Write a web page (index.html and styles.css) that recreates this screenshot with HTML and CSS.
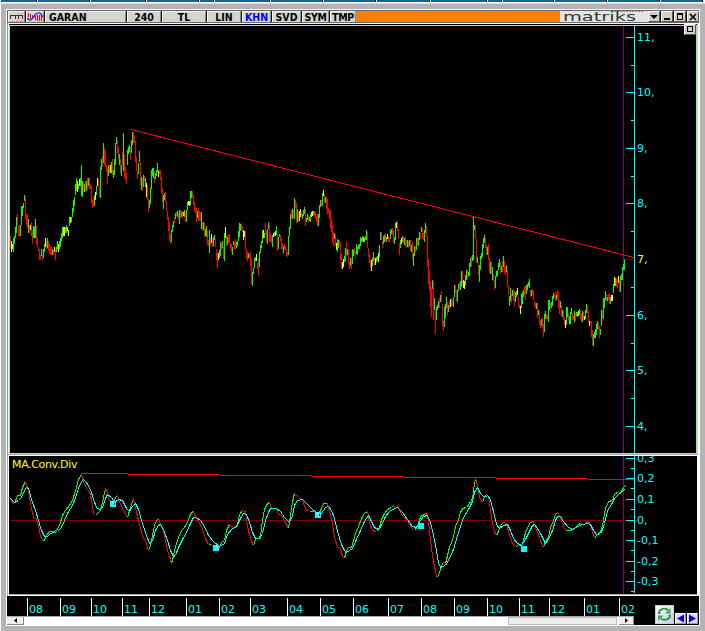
FILE: index.html
```html
<!DOCTYPE html>
<html lang="tr">
<head>
<meta charset="utf-8">
<title>GARAN</title>
<link rel="stylesheet" href="styles.css">
</head>
<body>
<div class="strip"><i class="w37"></i><i class="w52"></i><i class="w55"></i><i class="w52"></i><i class="w14"></i><i class="w55"></i><i class="w52"></i><i class="w52"></i><i class="w53"></i><i class="w56"></i><i class="w14"></i><i class="w51"></i><i class="w52"></i><i class="w52"></i><i class="w42"></i></div>
<main class="window">
  <header class="bar">
    <span class="cell ico"><svg width="16" height="10" viewBox="0 0 16 10" shape-rendering="crispEdges"><path d="M1 3H14M1.500 3V7M6.500 3V7M9.500 3V7M13.500 3V7" stroke="#333" stroke-width="1" fill="none"/><path d="M1 9.500H15" stroke="#f66" stroke-dasharray="1 1"/><path d="M8 8.500H15M9 1.500H15" stroke="#faa" stroke-dasharray="2 1"/></svg></span>
    <span class="cell ico2"><svg width="16" height="10" viewBox="0 0 16 10"><path d="M1.500 1V5M3.500 2V7M5.500 3V6M8.500 4V8M10.500 3V9M12.500 3V9M14.500 3V9" stroke="red"/><path d="M0 6L2 8H4L9 2L11 1H13L16 5" stroke="#11f" stroke-width="1.200" fill="none"/></svg></span>
    <span class="cell name">GARAN</span>
    <span class="cell c240">240</span>
    <span class="cell ctl">TL</span>
    <span class="cell clin">LIN</span>
    <span class="cell ckhn">KHN</span>
    <span class="cell csvd">SVD</span>
    <span class="cell csym">SYM</span>
    <span class="cell ctmp">TMP</span>
    <span class="orange"></span>
    <span class="logo"><svg width="88" height="11" viewBox="0 0 88 11"><path d="M54 .5H84" stroke="#f96a3a" stroke-dasharray="2 1"/><text x="3" y="10" textLength="73" lengthAdjust="spacingAndGlyphs">matriks</text></svg></span>
    <span class="btn"><svg width="11" height="9" viewBox="0 0 11 9"><path d="M1 3H9L5 7Z"/></svg></span>
    <span class="btn"><svg width="11" height="9" viewBox="0 0 11 9"><path d="M2 6H8V8H2Z"/></svg></span>
    <span class="btn"><svg width="11" height="9" viewBox="0 0 11 9"><path d="M2 1H8V8H2ZM3 3V7H7V3Z" fill-rule="evenodd"/></svg></span>
    <span class="btn"><svg width="11" height="9" viewBox="0 0 11 9"><path d="M2 2L8 8M8 2L2 8" stroke="#000" stroke-width="1.600"/></svg></span>
  </header>
  <section class="price">
    <svg id="price" width="686" height="427" viewBox="10 26 686 427"></svg>
    <span class="btn corner"><svg width="9" height="8" viewBox="0 0 9 8"><path d="M2 1H8V7H2ZM3 2V6H7V2Z" fill-rule="evenodd"/></svg></span>
  </section>
  <section class="macd"><svg id="macd" width="688" height="138" viewBox="9 456 688 138"></svg></section>
  <footer class="foot">
    <div class="timeline">
      <svg id="time" width="627" height="19" viewBox="7 597 627 19"></svg>
      <div class="scroll">
        <span class="sbtn"><svg width="5" height="5" viewBox="0 0 5 5"><path d="M1 2.500L4 0V5Z"/></svg></span>
        <span class="track"></span><span class="thumb"></span>
        <span class="sbtn right"><svg width="5" height="5" viewBox="0 0 5 5"><path d="M4 2.500L1 0V5Z"/></svg></span>
      </div>
    </div>
    <div class="tools">
      <span class="refresh"><svg width="17" height="17" viewBox="0 0 17 17"><path d="M3 8C3 3 8 1.500 12 4M14 8.500C14 13.500 9 15 5 12.500" fill="none" stroke="#279344" stroke-width="2.200"/><path d="M14.500 2V7.500H9ZM2 15V9.500H7.500Z" fill="#3cab55"/><path d="M4 6C6 3 9 3 11 5M13 10C12 12 9 13.500 6 12" stroke="#a9e3ad" fill="none"/></svg></span>
      <span class="nav"><svg width="9" height="9" viewBox="0 0 9 9"><path d="M1 4.500L8 .5V8.500Z"/></svg></span>
      <span class="nav"><svg width="9" height="9" viewBox="0 0 9 9"><path d="M8 4.500L1 .5V8.500Z"/></svg></span>
    </div>
  </footer>
</main>
<script src="chart.js"></script>
</body>
</html>
```
FILE: styles.css
```css
* { box-sizing: border-box; }
body { margin: 0; width: 705px; height: 631px; overflow: hidden; background: #b4b4b4; font: 11px "DejaVu Sans", sans-serif; border-left: 1px solid #fff; }
svg { display: block; }
.strip { height: 4px; margin-left: -1px; display: flex; background: #fff; border-bottom: 1px solid #ddd; }
.strip i { height: 2px; background: #006a9b; border-right: 1px solid #000; margin-right: 1px; flex: none; }
.w14 { width: 14px; } .w37 { width: 37px; } .w42 { width: 42px; } .w51 { width: 51px; } .w52 { width: 52px; }
.w53 { width: 53px; } .w55 { width: 55px; } .w56 { width: 56px; }
.window { width: 694px; height: 617px; margin: 5px 0 0 5px; border: 1px solid #fff; background: #000; display: flex; flex-direction: column; }
.bar { height: 13px; margin-left: 1px; border-top: 1px solid #666; border-bottom: 1px solid #666; display: flex; background: #111; flex: none; box-shadow: -1px 0 #666; }
.cell { height: 11px; background: #d5d5cf; border-left: 1px solid #fff; border-top: 1px solid #eee; border-right: 1px solid #888; margin-right: 1px; text-align: center; font: bold 10.500px/11px "DejaVu Sans Condensed", "DejaVu Sans", sans-serif; color: #000; flex: none; }
.ico { width: 17px; } .ico2 { width: 18px; }
.name { width: 81px; text-align: left; padding-left: 3px; }
.c240 { width: 34px; } .ctl { width: 44px; } .clin { width: 34px; } .ckhn { width: 29px; color: #00f; }
.csvd { width: 29px; } .csym { width: 27px; letter-spacing: -.3px; } .ctmp { width: 26px; margin: 0; letter-spacing: -.2px; }
.orange { flex: 1; background: #ff8000; }
.logo { width: 88px; background: #e4e4e4; }
.logo text { font: 13px "DejaVu Sans", sans-serif; fill: #333; }
.btn { width: 12px; margin-right: 1px; background: #d4d0c8; border: 1px solid; border-color: #fff #555 #555 #fff; flex: none; }
.bar .btn:last-child { margin-right: 0; }
.price { position: relative; width: 688px; height: 431px; margin-left: 2px; padding-top: 1px; border-top: 1px solid #fff; box-shadow: -1px 0 #fff, -2px 0 #999, 1px 0 #ccc, 2px 0 #fff; background: #000; flex: none; }
.price > svg { box-sizing: content-box; border: 1px solid #80ff80; }
.corner { position: absolute; top: 0; right: 1px; margin: 0; height: 11px; }
.macd { width: 692px; height: 142px; margin-bottom: 1px; padding-top: 1px; border-top: 1px solid #aaa; border-bottom: 1px solid #fff; border-left: 1px solid #aaa; border-right: 1px solid #fff; box-shadow: inset 1px 1px #fff, inset -1px 0 #fff; padding-left: 1px; flex: none; }
.macd svg { box-shadow: 0 1px #aaa; }
.foot { height: 28px; display: flex; justify-content: space-between; flex: none; }
.timeline { width: 627px; }
.scroll { height: 9px; display: flex; background: #fff; border-top: 1px solid #aaa; }
.sbtn { width: 17px; height: 8px; background: #eee; border-right: 1px solid #888; border-bottom: 1px solid #888; display: flex; align-items: center; justify-content: center; flex: none; }
.right { width: 15px; }
.track { flex: 1; }
.thumb { width: 109px; background: #eee; border: 1px solid #bbb; margin-right: 2px; }
.tools { display: flex; align-items: flex-end; padding: 0 1px 1px 0; gap: 1px; }
.refresh { width: 19px; height: 19px; background: linear-gradient(135deg, #fff, #c9c9ee); border: 1px solid #ccc; }
.nav { width: 11px; height: 11px; background: #ddd; border: 1px solid; border-color: #fff #999 #999 #fff; }
.nav path { fill: #0000e0; }
.axis { font: 11px "DejaVu Sans", sans-serif; fill: #0ff; }
.yellow { fill: #ff0; }
.title { letter-spacing: -.35px; }
```
FILE: chart.js
```js
const NS = "http://www.w3.org/2000/svg";
function add(parent, tag, attrs, text) {
  const el = document.createElementNS(NS, tag);
  for (const k in attrs) el.setAttribute(k, attrs[k]);
  if (text) el.textContent = text;
  parent.appendChild(el);
}
function rect(svg, x, y, width, height, fill) {
  add(svg, "rect", { x, y, width, height, fill, "shape-rendering": "crispEdges" });
}
function label(svg, x, y, text, cls) {
  add(svg, "text", { x, y, class: "axis " + (cls || "") }, text);
}
const colours = { r: "#f00", g: "#0f0", y: "#ff0" };

// One token per column from x = 10: high,low and colour; "-" leaves a gap.
const bars = `
236,248r 241,252y 244,249y 238,252g 236,244g 227,238g 217,233g 214,225r 225,236r 225,236r
225,236g 206,225g 206,216g 203,208g 195,201g 197,219r 214,225r 214,228r 219,233g 225,233r
225,230y 222,236r 230,244r 226,238g 227,238g 219,238g 225,244r 238,247r 247,251r 249,260r
255,260r 249,256g 255,260r 249,258g 244,252g 238,247y 241,249r 238,248g 241,251r 244,254r
247,255r 247,255r 249,255g 250,255r 247,252y 249,260r 247,252g 241,249g 244,252y 241,249g
238,247g 233,241g 227,238g 227,236y 227,236y 227,233g 225,233g 227,231y 230,236y 217,226g
217,223y 217,222g 208,217g 200,212g 197,206g 184,195g 178,191g 181,192y 184,189g 179,186y
178,186g 165,196g 181,197g 181,192r 184,192g 181,192r 181,191g 178,189r 178,186g 178,189r
184,189r 186,203r 200,208r 197,207r 195,206g 192,200y 186,195g 178,186y 179,187r 187,197r
167,198g 159,170g 156,167r 143,163g 148,165r 151,167r 165,172r 167,184r 165,176g 165,173r
165,173y 162,173g 159,175r 170,178g 159,175g 143,165g 137,144g 140,154r 147,159r 154,165g
159,173r 165,176g 152,165r 133,171g 154,178r 167,180r 173,184r 150,165g 147,154g 145,152g
147,160r 140,153g 132,145g 132,143r 135,143r 141,162r 157,171r 171,179r 163,174g 151,162g
162,185r 177,190g 178,191r 175,187g 176,182r 178,187g 183,197y 185,200r 199,212r 200,208g
188,204g 170,189g 168,176g 168,178g 171,183r 173,179g 170,176g 163,172g 171,177y 169,174r
170,180r 177,193r 188,203r 195,209g 193,200g 192,202r 201,211r 211,220r 217,231r 222,241r
234,244r 230,242g 225,232g 221,227g 217,223r 213,219g 212,216r 211,217g 213,220r 210,224g
210,218r 212,217g 211,218r 212,216y 210,217g 212,222r 210,222g 202,210g 201,205y 201,206y
191,205g 191,198g 191,198r 195,205r 202,211r 207,213r 208,222r 211,218g 208,221r 211,221r
212,221r 212,229g 222,231r 222,230g 223,237r 229,236g 226,237g 231,245r 240,246r 230,253g
238,246r 234,243y 239,247r 237,246g 235,240g 239,247r 249,260r 253,268r 253,260y 250,258g
242,256g 243,250r 241,248g 247,259r 233,261g 227,238y 235,246r 237,245g 235,243r 234,243r
243,248r 244,252r 247,255g 241,245g 242,249r 239,250r 242,248g 241,246g 231,241g 223,237g
224,231g 223,230r 226,232r 230,240y 231,237y 231,250r 249,259r 252,261r 253,258g 254,258r
252,266r 258,284r 272,286g 268,274g 258,268g 257,261g 254,261y 263,269r 258,276r 252,267g
245,253g 241,248g 230,243g 230,238y 233,238g 223,235r 231,243r 229,244g 222,229g 225,241r
233,242r 236,243r 235,247g 233,237y 232,236g 231,236y 226,235g 235,251r 237,249g 234,237g
235,241r 238,249r 243,249r 246,253g 244,250r 246,250r 249,256r 252,257r 236,255g 227,236g
214,229g 210,219r 209,219g 210,218r 198,219g 200,208r 203,223r 209,222g 212,222r 211,221y
209,217y 212,217r 214,219g 210,216g 207,214g 209,226r 218,222g 214,220g 215,222r 217,221g
214,222g 212,217y 211,216y 211,215g 211,216r 212,219r 216,222r 214,226r 214,226g 205,218g
200,207g 200,206r 193,206g 190,196y 194,202r 197,203g 197,209r 199,214r 208,213r 210,219r
210,228r 219,232r 225,242r 232,246r 233,239g 234,246r 243,250y 239,252g 240,248g 240,246r
242,260r 254,269r 262,269y 259,267y 256,262g 248,261g 242,256r 249,255g 250,264r 262,269r
258,266g 258,269r 249,264g 250,256g 248,254r 251,258r 244,254g 247,255g 245,249g 244,249g
237,246g 238,242g 236,241g 237,242y 238,242g 236,240g 230,240g 232,248r 248,257r 254,263r
259,268r 260,271y 258,266g 252,261g 257,265r 258,265y 257,262g 256,260g 253,262y 245,257g
232,240g 232,240r 241,248r 236,244g 235,242g 233,242r 237,242g 234,239y 236,242r 238,242r
230,239g 229,234g 228,235r 230,243r 237,244g 223,240g 222,228y 221,231r 229,239r 243,255r
240,248g 238,244y 236,242g 237,243r 238,245g 237,246r 240,248r 240,247g 241,248r 240,246g
240,251r 245,252g 242,260r 253,266g 246,256g 247,252r 238,250g 238,245r 238,246g 232,240g
233,239r 227,232g 228,238r 233,240r 230,242g 223,233g 226,236r 236,266r 259,284r 270,290r
281,307r 287,317r 280,289g 281,320r 298,310g 310,334r 307,320g 305,310g 301,308g 298,307r
295,302g 291,302r 304,326r 321,331r 307,327g 304,318g 297,308g 302,316r 305,312g 301,309r
299,307y 299,306r 301,306r 297,307g 285,297g 285,293r 290,301r 290,302g 284,291g 283,290r
281,290g 271,287g 271,285r 280,288y 281,289y 275,285g 270,280g 270,279r 272,276g 263,276g
258,267g 256,267r 255,261g 217,260g 225,230g 225,239r 239,263r 257,263g 263,275r 265,282g
256,270g 253,259g 244,257g 238,248g 235,243g 238,248r 245,255r 247,255g 244,260r 258,273r
262,274g 261,274r 267,280g 274,281r 280,290r 276,288g 271,277g 270,276g 263,270g 259,267g
262,274r 266,272g 261,272r 256,267g 261,273r 267,275r 265,272g 270,287r 286,295r 296,306g
288,301g 294,303r 290,296g 289,301r 291,307r 292,302g 291,297g 288,295y 297,306r 305,309r
306,314y 294,308g 292,304g 290,297g 286,295r 286,300r 285,294g 284,290g 282,286g 279,288g
290,297r 290,296g 289,295r 291,300r 301,306r 303,308r 303,309g 303,318r 310,315g 311,325r
320,328r 319,326g 317,328r 324,337r 314,332g 311,319g 314,319r 315,320r 300,322g 300,310g
303,312r 302,308g 296,306g 293,299g 294,298r 292,301r 295,300g 290,298r 292,308r 300,314r
301,308g 305,316r 310,317g 311,320r 317,325r 320,328y 307,325g 307,317g 313,320r 316,324g
312,324g 308,314g 313,320r 315,320r 311,322g 313,321r 312,316g 312,317g 311,316y 309,315g
310,320r 314,322r 311,322g 312,320r 316,320y 310,319g 304,313g 306,313r 311,322r 321,326y
321,324r 321,337r 330,346r 334,346g 332,338g 329,338g 324,335g 321,329g 322,330r 326,338r
329,335g 310,326g 310,321r 298,319g 298,308g 291,300g 294,301r 297,301g 294,300r 294,304r
297,304g 295,301y 295,301y 284,293g 277,286y 278,286g 278,286r 279,288r 276,283y 280,292r
276,292g 274,280g 267,280g 264,270g 259,270g`.trim().split(/\s+/);

const price = document.getElementById("price");
rect(price, 623, 26, 1, 427, "#800080");
bars.forEach((token, i) => {
  if (token === "-") return;
  const [, high, low, c] = token.match(/(\d+),(\d+)(\w)/);
  rect(price, 10 + i, +high, 1, low - high, colours[c]);
});
add(price, "path", { d: "M131 129.500L634 257.500", stroke: "#f00", "shape-rendering": "crispEdges" });
rect(price, 634, 26, 1, 427, "#0ff");
[[37, "11,"], [92, "10,"], [148, "9,"], [203, "8,"], [259, "7,"], [315, "6,"], [370, "5,"], [426, "4,"]].forEach(([y, t]) => {
  rect(price, 626, y, 8, 1, t === "7," ? "#00f" : "#0ff");
  if (y < 420) rect(price, 631, y + 28, 3, 1, "#0ff");
  label(price, 637, y + 4, t, t === "7," ? "yellow" : "");
});

const fast = "10,498 12,502 14,503 17,495 20,495 22,487 25,481 28,490 30,503 33,517 36,519 38,525 40,536 43,541 46,535 49,531 53,531 56,530 59,525 62,515 65,510 69,505 72,500 75,490 78,479 81,474 83,481 86,488 89,491 91,499 93,513 95,515 98,512 100,510 102,502 105,488 107,492 108,499 111,502 113,503 115,497 117,495 119,502 122,507 125,514 127,517 130,507 133,498 134,503 136,512 138,520 140,527 142,536 145,540 148,550 150,545 152,535 154,525 156,520 158,518 160,524 163,530 165,540 167,550 169,555 171,563 173,555 175,546 178,537 181,530 184,527 187,522 189,516 191,512 193,511 196,518 199,522 202,529 205,538 208,544 211,544 214,547 218,549 221,542 224,540 226,530 229,524 231,526 234,527 237,524 239,514 242,510 245,511 247,526 249,534 251,541 253,545 255,539 258,537 260,535 262,520 264,509 267,503 269,502 271,508 276,508 278,514 281,515 284,520 288,528 290,515 292,501 294,493 298,497 302,500 305,508 309,511 314,511 318,514 321,508 323,503 327,503 328,508 330,514 332,523 334,537 337,546 340,548 342,556 344,558 346,550 348,547 351,547 353,540 355,533 358,526 361,518 364,513 367,511 369,522 372,530 376,531 379,527 381,519 384,513 387,509 391,507 393,505 395,508 397,506 399,509 401,514 405,518 409,524 412,528 414,530 417,526 419,519 421,515 425,514 426,512 428,520 430,540 432,555 434,566 436,575 437,577 439,572 441,565 443,562 445,563 447,555 449,547 451,542 453,536 455,526 458,519 460,512 462,508 466,507 469,503 472,498 474,483 475,478 477,485 478,492 480,499 482,502 484,496 486,494 488,496 490,510 492,522 494,531 496,535 498,531 500,525 503,522 506,523 508,531 511,540 513,545 515,547 518,544 521,546 523,540 525,532 528,525 530,522 533,521 535,527 538,534 540,540 543,547 545,541 548,537 550,527 553,520 555,514 557,512 559,515 561,520 563,525 565,530 570,530 574,528 578,524 580,523 583,525 587,521 589,522 591,528 594,538 596,535 599,533 601,529 603,520 605,508 608,501 612,500 614,494 618,491 620,493 623,487 625,485";
const slow = "10,498 14,502 18,500 21,497 24,490 26,487 28,488 31,499 35,510 38,520 41,530 44,536 47,536 50,533 57,531 61,527 64,520 68,511 72,505 75,497 78,488 81,481 83,479 86,482 90,489 93,499 96,507 99,509 102,507 105,498 107,494 111,497 114,502 118,499 122,500 126,508 129,511 132,506 135,503 138,509 141,520 145,532 149,543 152,540 155,530 158,525 160,524 163,529 167,540 170,550 173,556 175,555 178,547 182,539 186,532 190,523 193,517 196,517 200,520 204,526 208,535 213,541 219,546 224,543 227,534 231,529 236,526 240,518 243,513 246,514 249,522 252,532 255,538 259,538 262,533 265,520 268,512 270,508 276,508 280,511 284,517 289,522 292,515 294,505 297,500 302,499 307,504 312,509 315,511 318,516 321,513 325,507 328,506 331,510 334,518 337,531 341,544 344,550 346,552 352,548 356,539 360,530 364,521 368,515 370,519 374,527 378,529 381,525 385,516 389,511 394,508 397,507 402,512 407,519 412,526 416,527 420,520 423,516 427,515 430,522 433,535 436,550 438,562 440,567 445,565 449,558 453,549 457,535 460,526 463,517 468,509 472,501 474,492 477,487 480,493 484,497 487,495 490,499 493,511 496,524 499,528 503,525 507,524 510,530 513,538 517,543 521,545 525,539 529,531 532,525 534,524 537,528 541,535 545,543 548,539 552,530 555,520 557,516 560,516 563,521 567,526 572,529 577,526 582,524 587,523 590,524 593,530 596,534 601,532 604,523 607,510 611,504 614,498 618,494 621,492 624,489";

const macd = document.getElementById("macd");
rect(macd, 623, 456, 1, 138, "#800080");
rect(macd, 10, 520, 624, 1, "#800000");
const points = fast.split(" ").map(p => p.split(",").map(Number));
for (let i = 1; i < points.length; i++) {
  const [x1, y1] = points[i - 1], [x2, y2] = points[i];
  add(macd, "path", { d: `M${x1 + .5} ${y1 + .5}L${x2 + .5} ${y2 + .5}`, stroke: y2 > y1 ? "#f00" : "#0f0", "shape-rendering": "crispEdges" });
}
add(macd, "polyline", { points: slow, transform: "translate(.5 .5)", fill: "none", stroke: "#0ff", "shape-rendering": "crispEdges" });
[[110, 501], [213, 545], [315, 512], [418, 523], [521, 546]].forEach(([x, y]) => rect(macd, x, y, 6, 6, "#0ff"));
[[112, 501], [216, 545], [317, 512]].forEach(([x, y]) => add(macd, "path", { d: `M${x} ${y}l3 5`, stroke: "#fff" }));
[[114, 503], [319, 514]].forEach(([x, y]) => rect(macd, x, y, 1, 2, "#00f"));
[81, 128, 220, 312, 404, 496, 588, 634].forEach((x, i, a) => {
  if (i < 7) rect(macd, x, 473 + i, a[i + 1] - x, 1, "#f00");
});
rect(macd, 634, 456, 1, 137, "#0ff");
[[458, "0,3"], [478, "0,2"], [499, "0,1"], [520, "0,"], [540, "-0,1"], [561, "-0,2"], [581, "-0,3"]].forEach(([y, t]) => {
  rect(macd, 626, y, 8, 1, "#0ff");
  rect(macd, 631, y + 10, 3, 1, "#0ff");
  label(macd, 637, y + 4, t);
});
label(macd, 12, 468, "MA.Conv.Div", "yellow title");

const time = document.getElementById("time");
[[27, "08"], [60, "09"], [91, "10"], [122, "11"], [149, "12"], [186, "01"], [219, "02"], [250, "03"], [287, "04"], [320, "05"], [353, "06"], [388, "07"], [421, "08"], [454, "09"], [487, "10"], [519, "11"], [549, "12"], [584, "01"], [619, "02"]].forEach(([x, t]) => {
  rect(time, x, 598, 1, 18, "#fff");
  label(time, x + 2, 613, t);
});
```
